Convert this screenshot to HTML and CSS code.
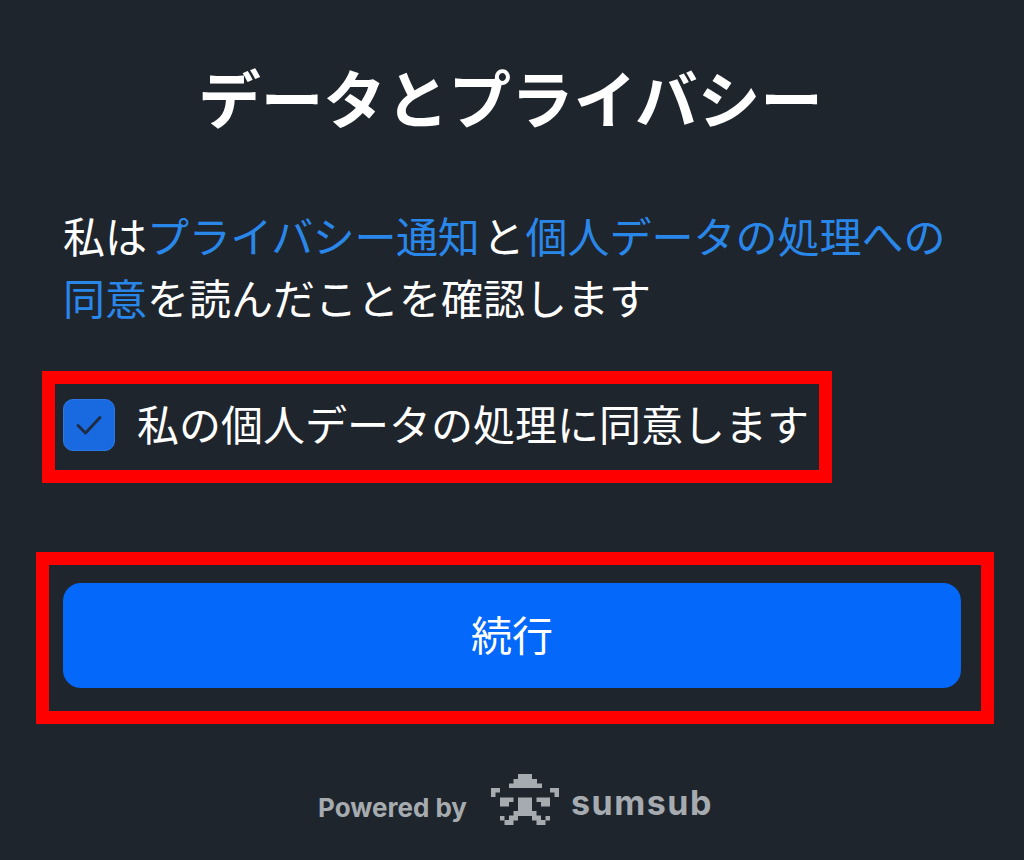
FILE: index.html
```html
<!DOCTYPE html>
<html lang="ja">
<head>
<meta charset="utf-8">
<title>データとプライバシー</title>
<link rel="stylesheet" href="styles.css">
</head>
<body>
<main class="page">
  <h1 class="title">データとプライバシー</h1>
  <p class="notice">私は<a class="link-first" href="#">プライバシー通知</a>と<a class="link-second" href="#">個人データの処理への同意</a>を読んだことを確認します</p>
  <div class="consent-frame">
    <label class="consent">
      <span class="checkbox">
        <svg width="30" height="30" viewBox="0 0 30 30" aria-hidden="true"><path class="tick" d="M4 15.5l7.5 7.5L26 7.5"/></svg>
      </span>
      <span class="consent-text">私の個人データの処理に同意します</span>
    </label>
  </div>
  <div class="button-frame">
    <button class="continue" type="button">続行</button>
  </div>
  <footer class="powered">
    <span class="powered-text">Powered by</span>
    <svg class="logo" width="68" height="52" viewBox="0 0 68 52" aria-hidden="true">
      <path d="M27 0h14v5h5v4.500h5V14H18V9.500h4.500V5H27z"/>
      <path d="M0 14h9v4.500H4.500V23H0zM59 14h9v9h-4.500v-4.500H59z"/>
      <path d="M9 23.500h13.500V28H18v4.500H9zM59 23.500H45.500V28H50v4.500h9z"/>
      <path d="M27 23.500h14V37h4.500v4.500H50V46h4.500v5H45.500v-4.500H41V42H27v4.500h-4.500V51H13.500v-5H18v-4.500h4.500V37H27z"/>
      <path d="M9 42h4.500v4.500H9zM54.500 42H59v4.500h-4.500z"/>
    </svg>
    <span class="brand">sumsub</span>
  </footer>
</main>
</body>
</html>
```
FILE: styles.css
```css
* { box-sizing: border-box; }
html, body { margin: 0; height: 100%; }
body {
  background: #1f252d;
  color: #fff;
  font-family: "Noto Sans CJK JP", "Noto Sans", sans-serif;
}
.page {
  width: 1024px;
  height: 860px;
  padding: 0 63px;
  overflow: hidden;
}
.title {
  margin: 0 -20px;
  padding: 51px 3px 0 0;
  height: 204px;
  font-size: 62.6px;
  line-height: 90px;
  font-weight: 700;
  text-align: center;
}
.notice {
  margin: 0;
  font-size: 42px;
  line-height: 62px;
  height: 167px;
}
.notice a { color: #2a87ea; text-decoration: none; }
.link-first { letter-spacing: -0.35px; margin-right: 3px; }
.link-second { margin-left: 1px; }
.consent-frame {
  margin-left: -21px;
  width: 790px;
  height: 112px;
  border: 13px solid #ff0000;
  padding-left: 8px;
  display: flex;
  align-items: center;
}
.consent {
  display: flex;
  align-items: center;
  gap: 22px;
  font-size: 42px;
  line-height: 60px;
  white-space: nowrap;
  position: relative;
  top: -2px;
}
.consent-text {
  position: relative;
  top: -2px;
}
.checkbox {
  flex: none;
  width: 52px;
  height: 52px;
  border-radius: 10px;
  background: #196ae0;
  border: 1px solid #2a78e6;
  display: flex;
  align-items: center;
  justify-content: center;
}
.tick {
  fill: none;
  stroke: #1f2c45;
  stroke-width: 3;
  stroke-linecap: round;
  stroke-linejoin: round;
}
.button-frame {
  margin: 69px 0 0 -27px;
  width: 958px;
  height: 172px;
  border: 13px solid #ff0000;
  padding: 18px 14px;
}
.continue {
  display: block;
  width: 898px;
  height: 105px;
  border: 0;
  border-radius: 18px;
  background: #0468fb;
  color: #fff;
  font-family: inherit;
  font-size: 41px;
  line-height: 50px;
  padding: 0 0 5px;
}
.powered {
  margin-top: 50px;
  display: flex;
  align-items: center;
  color: #a6abb0;
  margin-left: 255px;
}
.powered-text {
  font-family: Inter, "Liberation Sans", sans-serif;
  font-size: 26px;
  font-weight: 700;
  width: 173px;
  white-space: nowrap;
  position: relative;
  top: 7px;
}
.logo { flex: none; fill: #a6abb0; }
.brand {
  margin-left: 12px;
  font-family: Inter, "DejaVu Sans", sans-serif;
  font-size: 34px;
  font-weight: 700;
  line-height: 40px;
  letter-spacing: 1.5px;
  position: relative;
  top: 3px;
}
```
